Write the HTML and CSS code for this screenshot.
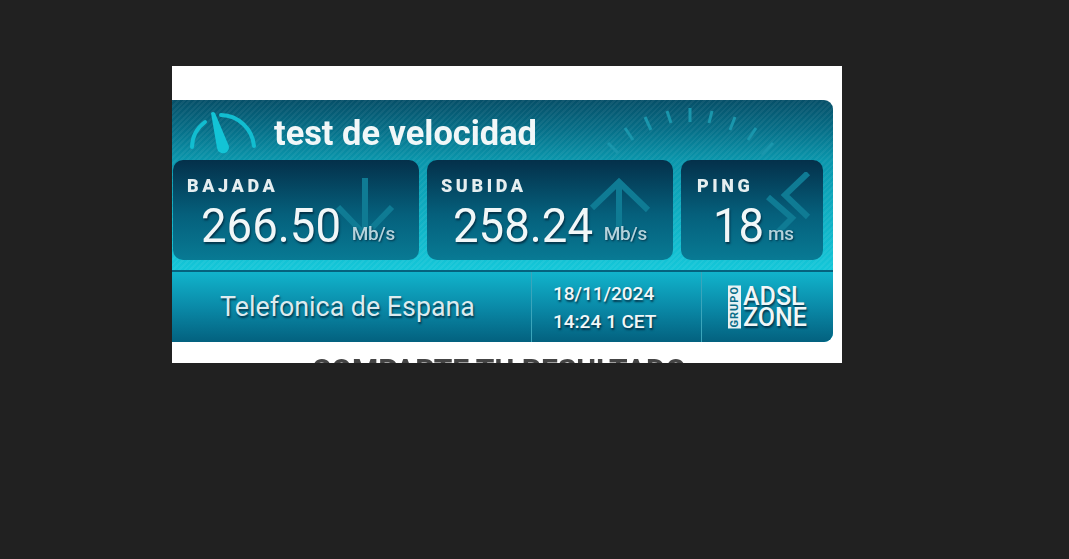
FILE: index.html
```html
<!DOCTYPE html>
<html>
    <head>
        <meta charset="UTF-8">
        <title>Test de velocidad</title>
        <link rel="stylesheet" href="styles.css">
    </head>
    <body>
        <section class="sheet">
            <div class="result">
                <header class="resultTop">
                    <svg class="gaugeIcon" width="68" height="46" viewBox="0 0 68 46">
                        <path d="M4 39 A32 32 0 0 1 17 14" class="gaugeArc"/>
                        <path d="M33 7 A34 34 0 0 1 66 38" class="gaugeArc"/>
                        <path d="M23 5 Q25 3 27 5 L40 36 A6 6 0 1 1 29 40 Z" fill="#13c4d6"/>
                    </svg>
                    <h1>test de velocidad</h1>
                    <svg class="ticks" width="176" height="56" viewBox="0 0 176 56">
                        <path d="M3 40 L13 50 M20 25 L28 37 M40 14 L46 27 M62 8 L66 20 M85 5 L85 19 M107 8 L104 20 M130 14 L125 27 M151 25 L143 37 M168 40 L157 52"/>
                    </svg>
                </header>
                <div class="stats">
                    <div class="stat statDown">
                        <span class="statName">BAJADA</span>
                        <svg class="statIcon" width="62" height="72" viewBox="0 0 62 72">
                            <path d="M30 1 V58 M3 30 L30 58 L57 30"/>
                        </svg>
                        <p class="statValue"><b>266.50</b><small>Mb/s</small></p>
                    </div>
                    <div class="stat statUp">
                        <span class="statName">SUBIDA</span>
                        <svg class="statIcon" width="64" height="72" viewBox="0 0 64 72">
                            <path d="M31 66 V7 M4 33 L31 7 L60 35"/>
                        </svg>
                        <p class="statValue"><b>258.24</b><small>Mb/s</small></p>
                    </div>
                    <div class="stat statPing">
                        <span class="statName">PING</span>
                        <svg class="statIcon" width="48" height="72" viewBox="0 0 48 72">
                            <path d="M42 1 L19 23 L42 45 M2 25 L26 46 L12 60"/>
                        </svg>
                        <p class="statValue"><b>18</b><small>ms</small></p>
                    </div>
                </div>
                <footer class="resultBottom">
                    <div class="isp">Telefonica de Espana</div>
                    <div class="date">18/11/2024<br>14:24 1 CET</div>
                    <div class="brand">
                        <span class="brandTag">GRUPO</span>
                        <span class="brandName">ADSL<br>ZONE</span>
                    </div>
                </footer>
            </div>
            <h2>COMPARTE TU RESULTADO</h2>
        </section>
    </body>
</html>
```

FILE: styles.css
```css
:root{
    --cyan: #12bdd0;
    --text: #f1f7f8;
}

html, body{height: 100%;}
body{
    margin: 0;
    padding: 66px 0 0 172px;
    box-sizing: border-box;
    background-color: #212121;
    font-family: Roboto, "Liberation Sans", sans-serif;
}

/*---------white page behind the image---------*/
.sheet{
    width: 670px;
    height: 297px;
    padding-top: 34px;
    box-sizing: border-box;
    overflow: hidden;
    background-color: white;
}
.sheet h2{
    margin: 13px 0 0 0;
    padding-right: 16px;
    font-size: 30px;
    line-height: 30px;
    text-align: center;
    color: #444;
    filter: blur(0.6px);
}

/*---------result card---------*/
.result{
    width: 661px;
    height: 242px;
    overflow: hidden;
    border-radius: 0 9px 9px 0;
    background:
        repeating-linear-gradient(135deg, rgba(255,255,255,0.05) 0 2px, transparent 2px 4px),
        linear-gradient(#064f68 0, #066f88 30px, #0a96ac 60px, #14c6d8 168px);
    filter: blur(0.5px);
}

.resultTop{
    display: flex;
    align-items: center;
    height: 60px;
    position: relative;
}
.resultTop h1{
    margin: 6px 0 0 18px;
    font-size: 34.4px;
    font-weight: 700;
    color: var(--text);
}
.gaugeIcon{margin: 2px 0 0 16px;}
.gaugeArc{
    fill: none;
    stroke: var(--cyan);
    stroke-width: 4;
    stroke-linecap: round;
}
.ticks{
    position: absolute;
    left: 433px;
    top: 3px;
}
.ticks path{
    fill: none;
    stroke: #1a96ac;
    stroke-width: 3;
}

/*---------three dark boxes---------*/
.stats{
    display: flex;
    gap: 8px;
    height: 100px;
    padding-left: 1px;
}
.stat{
    position: relative;
    height: 100px;
    box-sizing: border-box;
    padding: 16px 0 0 14px;
    overflow: hidden;
    border-radius: 10px;
    background: linear-gradient(#04304a, #05607c 55%, #087a94);
}
.statDown, .statUp{width: 246px;}
.statPing{width: 142px; padding-left: 16px;}

.statName{
    display: block;
    font-size: 18px;
    line-height: 20px;
    font-weight: 900;
    letter-spacing: 3.6px;
    color: #e6eef0;
}
.statIcon{
    position: absolute;
    top: 17px;
    left: 162px;
}
.statUp .statIcon{left: 161px; top: 15px;}
.statPing .statIcon{left: 85px; top: 12px;}
.statIcon path{
    fill: none;
    stroke: #0f7b94;
    stroke-width: 6;
}

.statValue{
    position: relative;
    display: flex;
    align-items: baseline;
    margin: 5px 0 0 14px;
    color: var(--text);
}
.statUp .statValue{margin-left: 12px;}
.statPing .statValue{margin-left: 16px;}
.statValue b{
    font-size: 49px;
    line-height: 50px;
    font-weight: 400;
    transform: scaleX(0.93);
    transform-origin: left;
    text-shadow: 1px 2px 2px rgba(0,30,50,0.7);
}
.statValue small{
    font-size: 19px;
    font-weight: 500;
    letter-spacing: -0.3px;
    color: #b5d3dc;
    transform: translateY(-2px);
    text-shadow: 1px 1px 2px rgba(0,30,50,0.7);
}

/*---------bottom strip---------*/
.resultBottom{
    display: flex;
    height: 72px;
    margin-top: 10px;
    box-sizing: border-box;
    border-top: 2px solid #05637e;
    background: linear-gradient(#11b4cc, #0a8aa8 50%, #03617f);
    color: var(--text);
    text-shadow: 1px 2px 2px rgba(0,30,50,0.75);
}
.isp{
    width: 360px;
    padding-right: 8px;
    box-sizing: border-box;
    display: flex;
    align-items: center;
    justify-content: center;
    font-size: 26.8px;
    color: #dcebef;
    border-right: 1px solid #3aa5bb;
}
.date{
    width: 170px;
    box-sizing: border-box;
    padding: 2px 0 0 21px;
    font-size: 19px;
    line-height: 28px;
    font-weight: 500;
    display: flex;
    align-items: center;
    border-right: 1px solid #3aa5bb;
}
.brand{
    flex: 1;
    display: flex;
    align-items: center;
    padding-left: 26px;
    gap: 2px;
}
.brandTag{
    writing-mode: vertical-rl;
    transform: rotate(180deg);
    padding: 1px;
    font-size: 11px;
    font-weight: 700;
    line-height: 11px;
    letter-spacing: 1px;
    color: #0a6d88;
    background-color: #e8f2f4;
    text-shadow: none;
}
.brandName{
    font-size: 25px;
    line-height: 21px;
    font-weight: 500;
}
```
